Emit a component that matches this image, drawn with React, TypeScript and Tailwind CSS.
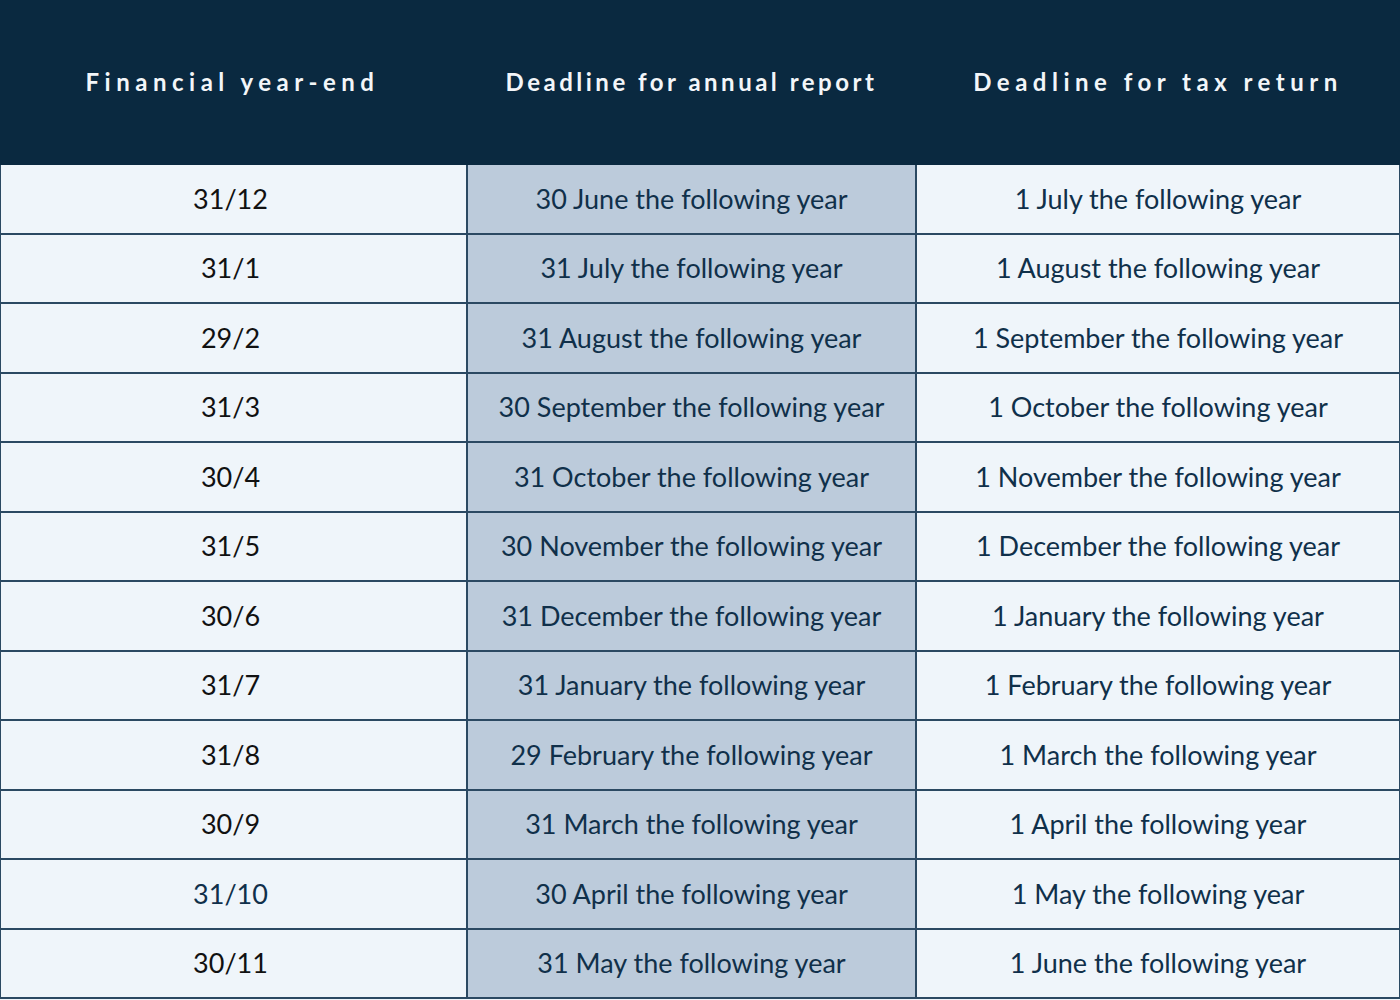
import React from "react";

const rows: [string, string, string][] = [
  ["31/12", "30 June the following year", "1 July the following year"],
  ["31/1", "31 July the following year", "1 August the following year"],
  ["29/2", "31 August the following year", "1 September the following year"],
  ["31/3", "30 September the following year", "1 October the following year"],
  ["30/4", "31 October the following year", "1 November the following year"],
  ["31/5", "30 November the following year", "1 December the following year"],
  ["30/6", "31 December the following year", "1 January the following year"],
  ["31/7", "31 January the following year", "1 February the following year"],
  ["31/8", "29 February the following year", "1 March the following year"],
  ["30/9", "31 March the following year", "1 April the following year"],
  ["31/10", "30 April the following year", "1 May the following year"],
  ["30/11", "31 May the following year", "1 June the following year"],
];

export default function App() {
  return (
    <div className="w-[1400px] h-[1000px] bg-[#eff5fa] overflow-hidden" style={{ fontFamily: "Lato, 'Open Sans', sans-serif" }}>
      <div className="grid grid-cols-[467px_449px_484px] h-[165px] bg-[#0a2940] text-[#f3f6f9] text-[24px] font-bold">
        <div className="flex items-center justify-center pb-[2px] pr-[2px] tracking-[5.5px]">Financial year-end</div>
        <div className="flex items-center justify-center pb-[2px] tracking-[3.5px]">Deadline for annual report</div>
        <div className="flex items-center justify-center pb-[2px] tracking-[5.5px]">Deadline for tax return</div>
      </div>
      <div className="grid grid-cols-[467px_449px_484px] border-l border-[#2b4962] text-[27px] text-[#10304a]">
        {rows.map((r, i) => (
          <React.Fragment key={i}>
            <div className={`h-[69.5px] flex items-center justify-center pr-[6px] border-b-2 border-r-2 border-[#2b4962] ${i === 10 ? "text-[#10304a]" : "text-[#111111]"}`}>
              {r[0]}
            </div>
            <div className="h-[69.5px] flex items-center justify-center border-b-2 border-r-2 border-[#2b4962] bg-[#bccbdb]">
              {r[1]}
            </div>
            <div className="h-[69.5px] flex items-center justify-center border-b-2 border-r-2 border-[#2b4962]">
              {r[2]}
            </div>
          </React.Fragment>
        ))}
      </div>
    </div>
  );
}
